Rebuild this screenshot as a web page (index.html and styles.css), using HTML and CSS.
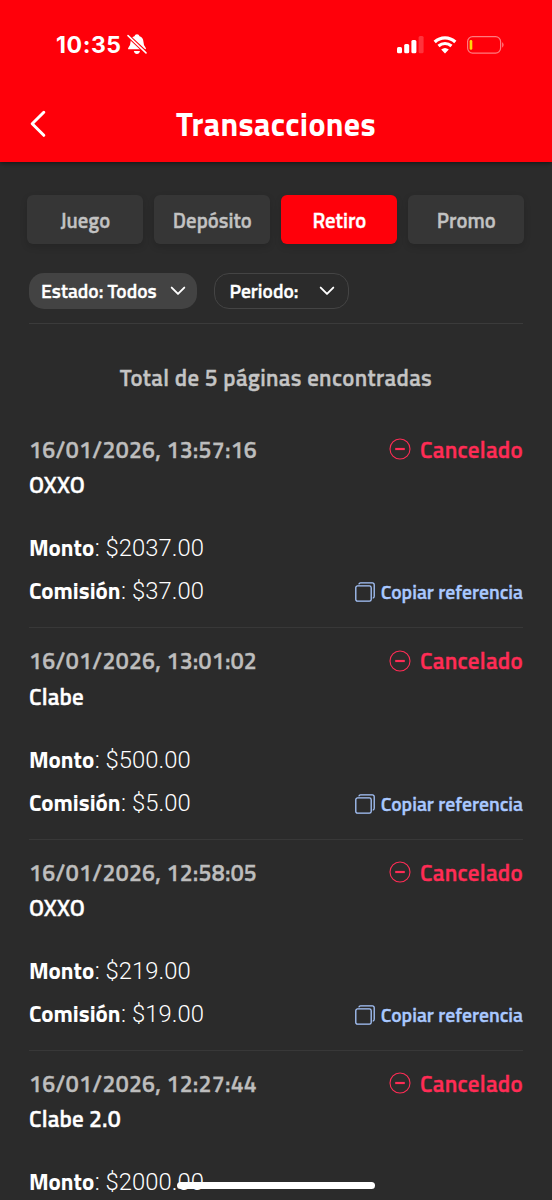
FILE: index.html
```html
<!DOCTYPE html>
<html lang="es">
<head>
<meta charset="utf-8">
<title>Transacciones</title>
<link rel="stylesheet" href="styles.css">
</head>
<body>
<svg class="defs" width="0" height="0">
  <symbol id="minus" viewBox="0 0 22 22"><circle cx="11" cy="11" r="10" fill="none" stroke="currentColor" stroke-width="1.1"/><path d="M6.2 11h9.6" stroke="currentColor" stroke-width="2.2"/></symbol>
  <symbol id="copy" viewBox="0 0 20 20"><rect x=".8" y="3.9" width="15.4" height="15.3" rx="1.8" fill="none" stroke="currentColor" stroke-width="1.3"/><path d="M3.8 2.3Q4.1.8 5.6.8H17.3Q19.2.8 19.2 2.7V14.3Q19.2 16 17.7 16.2" fill="none" stroke="currentColor" stroke-width="1.3"/></symbol>
  <symbol id="down" viewBox="0 0 16 10"><path d="M1.7 1.6 8 7.9 14.3 1.6" fill="none" stroke="currentColor" stroke-width="1.9" stroke-linecap="round" stroke-linejoin="round"/></symbol>
</svg>
<div class="screen">
  <header class="top">
    <div class="status">
      <span class="clock">10:35</span>
      <svg class="bell" width="20" height="21" viewBox="0 0 20 21"><path d="M1.2 15.3Q.7 14.5 1.5 13.5Q3.5 11.4 3.6 7.6Q3.8 3.4 7.4 2.2Q8 .3 10 .3T12.6 2.2Q16.2 3.4 16.4 7.6Q16.5 11.4 18.5 13.5Q19.3 14.5 18.8 15.3Z" fill="#fff"/><path d="M6.8 17H13Q12.3 20 9.9 20T6.8 17Z" fill="#fff"/><path d="M1.3 2 19 18.6" stroke="#ff000a" stroke-width="3.6"/><path d="M1 1.6 19 18.9" stroke="#fff" stroke-width="1.5" stroke-linecap="round"/></svg>
      <svg class="signal" width="27" height="18" viewBox="0 0 27 18" fill="#fff"><rect y="11" width="5" height="6.3" rx="1.5"/><rect x="7.2" y="8" width="5" height="9.3" rx="1.5"/><rect x="14.4" y="4" width="5" height="13.3" rx="1.5"/><rect x="21.6" y="0" width="5" height="17.3" rx="1.5" opacity=".2"/></svg>
      <svg class="wifi" width="24" height="18" viewBox="0 0 24 18" fill="none" stroke="#fff"><path d="M1.7 6Q6.2 1.9 12 1.9T22.3 6" stroke-width="3.3"/><path d="M5.5 10Q8.4 7.5 12 7.5T18.5 10" stroke-width="3.1"/><path d="M12 17.5 8.2 13.6Q12 10.5 15.8 13.6Z" fill="#fff" stroke="none"/></svg>
      <svg class="battery" width="38" height="18" viewBox="0 0 38 18"><rect x=".6" y=".6" width="33" height="16.5" rx="5" fill="none" stroke="#fff" stroke-opacity=".48" stroke-width="1.2"/><rect x="2.6" y="4" width="2.7" height="9.8" rx="1.3" fill="#ffd60a"/><path d="M35.2 6Q38 8.8 35.2 11.8Z" fill="#fff" opacity=".5"/></svg>
    </div>
    <div class="nav">
      <svg class="back" width="16" height="28" viewBox="0 0 16 28"><path d="M13.8 2.3 2.2 13.8 13.8 25.3" fill="none" stroke="#fff" stroke-width="3" stroke-linecap="round" stroke-linejoin="round"/></svg>
      <h1 class="title">Transacciones</h1>
    </div>
  </header>
  <main class="content">
    <nav class="tabs">
      <span class="tab"><b>Juego</b></span><span class="tab"><b>Depósito</b></span><span class="tab active"><b>Retiro</b></span><span class="tab"><b>Promo</b></span>
    </nav>
    <div class="filters">
      <span class="chip filled"><b>Estado: Todos</b><svg width="16" height="10"><use href="#down"/></svg></span>
      <span class="chip outline"><b>Periodo:</b><svg width="16" height="10"><use href="#down"/></svg></span>
    </div>
    <p class="total">Total de 5 páginas encontradas</p>
    <section class="list">
      <article class="item">
        <div class="head"><time>16/01/2026, 13:57:16</time><span class="state"><svg width="22" height="22"><use href="#minus"/></svg><b>Cancelado</b></span></div>
        <h2 class="method">OXXO</h2>
        <p class="amount"><b>Monto</b><span>: $2037.00</span></p>
        <div class="fee"><p><b>Comisión</b><span>: $37.00</span></p><span class="copy"><svg width="20" height="20"><use href="#copy"/></svg><b>Copiar referencia</b></span></div>
      </article>
      <article class="item">
        <div class="head"><time>16/01/2026, 13:01:02</time><span class="state"><svg width="22" height="22"><use href="#minus"/></svg><b>Cancelado</b></span></div>
        <h2 class="method">Clabe</h2>
        <p class="amount"><b>Monto</b><span>: $500.00</span></p>
        <div class="fee"><p><b>Comisión</b><span>: $5.00</span></p><span class="copy"><svg width="20" height="20"><use href="#copy"/></svg><b>Copiar referencia</b></span></div>
      </article>
      <article class="item">
        <div class="head"><time>16/01/2026, 12:58:05</time><span class="state"><svg width="22" height="22"><use href="#minus"/></svg><b>Cancelado</b></span></div>
        <h2 class="method">OXXO</h2>
        <p class="amount"><b>Monto</b><span>: $219.00</span></p>
        <div class="fee"><p><b>Comisión</b><span>: $19.00</span></p><span class="copy"><svg width="20" height="20"><use href="#copy"/></svg><b>Copiar referencia</b></span></div>
      </article>
      <article class="item">
        <div class="head"><time>16/01/2026, 12:27:44</time><span class="state"><svg width="22" height="22"><use href="#minus"/></svg><b>Cancelado</b></span></div>
        <h2 class="method">Clabe 2.0</h2>
        <p class="amount"><b>Monto</b><span>: $2000.00</span></p>
      </article>
    </section>
  </main>
  <div class="home"></div>
</div>
</body>
</html>
```
FILE: styles.css
```css
* { box-sizing: border-box; margin: 0; padding: 0; }
body { background: #2b2b2b; font-family: "Titillium Web", Roboto, sans-serif; color: #fff; }
svg { display: block; flex: none; }
b { font-weight: 600; }
.defs { position: absolute; }
.screen { position: relative; width: 552px; height: 1200px; overflow: hidden; }
.top { height: 162px; background: #ff000a; box-shadow: 0 1px 5px rgba(0,0,0,.55); }
.status { display: flex; align-items: center; height: 88px; padding: 1px 47.5px 0 56px; }
.clock { width: 71px; font: 700 23px/26px Inter, sans-serif; letter-spacing: .6px; }
.signal { margin-left: auto; }
.wifi { margin-left: 9px; }
.battery { margin-left: 10px; }
.nav { display: grid; grid-template-columns: 60px 1fr 60px; align-items: center; height: 74px; padding-bottom: 3px; }
.back { margin-left: 30px; }
.title { font-size: 32px; line-height: 38px; font-weight: 700; letter-spacing: .35px; text-align: center; white-space: nowrap; }
.content { padding: 33px 28px 0; }
.tabs { display: grid; grid-template-columns: repeat(4, 116px); gap: 11px; margin-left: -.7px; }
.tab { display: flex; justify-content: center; align-items: center; height: 49px; padding-top: 2px; border-radius: 6px; background: #363636; color: #c2c2c2; font-size: 20.7px; -webkit-text-stroke: .3px; box-shadow: 0 3px 7px rgba(0,0,0,.14); }
.tab.active { background: #ff000a; color: #fff; }
.filters { display: flex; gap: 17px; height: 51px; margin: 29px 1px 0; border-bottom: 1px solid #3b3b3b; }
.chip { display: flex; justify-content: space-between; align-items: center; height: 36px; padding: 0 11px 1px 12px; border-radius: 15px; font-size: 19.5px; -webkit-text-stroke: .3px; }
.filled { width: 168.4px; background: #434343; }
.outline { width: 135px; border: 1.5px solid #444; padding-right: 13px; padding-left: 14px; }
.total { margin-top: 38px; height: 55px; line-height: 32px; text-align: center; color: #c4c4c4; font-size: 22.8px; font-weight: 600; letter-spacing: .36px; -webkit-text-stroke: .3px; }
.list { padding: 0 1px; }
.item { height: 211.4px; padding-top: 15.3px; border-bottom: 1px solid #383838; font-size: 23px; }
.head { display: flex; justify-content: space-between; align-items: center; height: 34px; }
.head time { color: #bdbdbd; font-weight: 600; letter-spacing: .28px; -webkit-text-stroke: .3px; }
.state { display: flex; align-items: center; gap: 9px; color: #ff2c55; letter-spacing: .27px; -webkit-text-stroke: .3px; }
.method { height: 36px; line-height: 36px; margin-top: 1px; font-size: 23px; font-weight: 600; letter-spacing: .15px; -webkit-text-stroke: .3px; }
.amount { margin-top: 27px; height: 36px; line-height: 36px; }
.fee { display: flex; justify-content: space-between; align-items: center; height: 36px; margin-top: 7px; line-height: 36px; }
.item p { display: flex; white-space: pre; }
.item p b { font-weight: 700; }
.item p span { font-family: Roboto, sans-serif; font-weight: 300; font-size: 23.8px; margin-left: .5px; letter-spacing: .05px; }
.copy { display: flex; align-items: center; gap: 6px; padding-top: 2px; color: #a9c8ff; font-size: 19.65px; -webkit-text-stroke: .3px; }
.home { position: absolute; left: 177px; top: 1182px; width: 198px; height: 7px; border-radius: 4px; background: #fff; }
```
